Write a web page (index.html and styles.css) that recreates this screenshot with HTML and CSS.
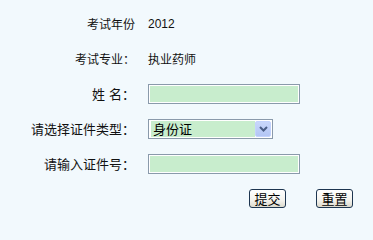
FILE: index.html
```html
<!DOCTYPE html>
<html lang="zh-CN">
<head>
<meta charset="utf-8">
<title>考试信息</title>
<link rel="stylesheet" href="styles.css">
</head>
<body>
<form class="form">
  <div class="label">考试年份</div>
  <div class="value num">2012</div>

  <div class="label">考试专业：</div>
  <div class="value">执业药师</div>

  <div class="label big">姓<span class="sp"></span>名：</div>
  <div class="value"><input class="field" type="text"></div>

  <div class="label big">请选择证件类型：</div>
  <div class="value">
    <span class="select-wrap">
      <select class="select"><option>身份证</option></select>
      <span class="select-btn"><svg width="9" height="6" viewBox="0 0 9 6"><path d="M1 1 L4.5 4.5 L8 1" fill="none" stroke="#4a5e86" stroke-width="2"/></svg></span>
    </span>
  </div>

  <div class="label big">请输入证件号：</div>
  <div class="value"><input class="field" type="text"></div>

  <div class="label"></div>
  <div class="value actions">
    <button type="button" class="btn">提交</button>
    <button type="reset" class="btn">重置</button>
  </div>
</form>
</body>
</html>
```

FILE: styles.css
```css
html, body {
  margin: 0;
  padding: 0;
  background: #f2f9fd;
}
body {
  font-family: "Noto Sans CJK SC", "Liberation Sans", sans-serif;
  font-size: 12px;
  color: #111;
}
.form {
  display: grid;
  grid-template-columns: 135px 1fr;
  grid-auto-rows: 35px;
  column-gap: 13px;
  align-items: center;
  padding-top: 6px;
  margin: 0;
}
.label {
  text-align: right;
  line-height: 14px;
  white-space: nowrap;
}
.label.big {
  font-size: 13px;
  line-height: 16px;
}
.sp {
  display: inline-block;
  width: 4px;
}
.value {
  line-height: 14px;
  display: flex;
  align-items: center;
}
.num {
  font-family: "Liberation Sans", sans-serif;
  font-size: 12px;
}
.field {
  box-sizing: border-box;
  width: 152px;
  height: 20px;
  margin: 0;
  padding: 0 2px;
  border: 1px solid #8a9aab;
  border-left-width: 2px;
  border-right-width: 2px;
  outline: 1px solid #fff;
  outline-offset: -2px;
  background: #c8edcd;
  font: inherit;
}
.select-wrap {
  position: relative;
  display: inline-block;
  width: 125px;
  height: 20px;
}
.select {
  -webkit-appearance: none;
  appearance: none;
  box-sizing: border-box;
  width: 125px;
  height: 20px;
  margin: 0;
  padding: 0 0 0 4px;
  border: 1px solid #8a9aab;
  border-radius: 0;
  background-color: #fff;
  background-image: linear-gradient(#c8edcd, #c8edcd);
  background-size: 104px 16px;
  background-position: 2px 1px;
  background-repeat: no-repeat;
  font-family: "Noto Sans CJK SC", sans-serif;
  font-size: 13px;
  color: #000;
  line-height: 18px;
}
.select-btn {
  position: absolute;
  top: 2px;
  right: 2px;
  width: 16px;
  height: 16px;
  box-sizing: border-box;
  border: 1px solid #c3d3fd;
  border-radius: 2px;
  background: linear-gradient(#c8d7fb, #b3c6f5);
  display: flex;
  align-items: center;
  justify-content: center;
  pointer-events: none;
}
.actions {
  padding-left: 101px;
  gap: 30px;
}
.btn {
  box-sizing: border-box;
  width: 37px;
  height: 19px;
  margin: 0;
  padding: 0;
  border: 1px solid #1d3550;
  border-radius: 3px;
  background: linear-gradient(#ffffff, #f4f3ee 60%, #dcd9cc);
  font-family: "Noto Sans CJK SC", sans-serif;
  font-size: 13px;
  line-height: 16px;
  color: #000;
}
```
